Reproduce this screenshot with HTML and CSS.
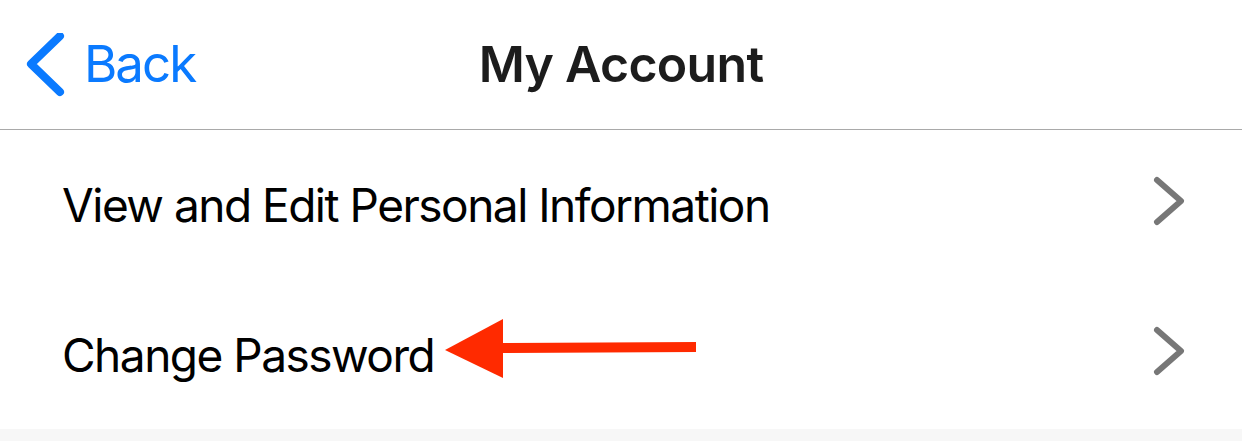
FILE: index.html
```html
<!DOCTYPE html>
<html lang="en">
<head>
  <meta charset="UTF-8" />
  <meta name="viewport" content="width=device-width, initial-scale=1.0"/>
  <title>My Account</title>
  <link rel="stylesheet" href="styles.css">
</head>
<body>
  <div id="screen">
    <div class="navbar">
      <a class="back" href="#">
        <svg class="back-icon" width="40" height="64" viewBox="0 0 40 64">
          <polyline points="34,3 5,31 34,59" fill="none" stroke="#0a7aff" stroke-width="8" stroke-linecap="round" stroke-linejoin="round"/>
        </svg>
        <span class="back-label">Back</span>
      </a>
      <h1 class="title">My Account</h1>
      <div class="spacer"></div>
    </div>

    <div class="list">
      <div class="row">
        <span class="row-label">View and Edit Personal Information</span>
        <svg class="chevron" width="34" height="52" viewBox="0 0 34 52">
          <polyline points="5,5 29,26 5,47" fill="none" stroke="#777" stroke-width="6" stroke-linecap="round" stroke-linejoin="round"/>
        </svg>
      </div>
      <div class="row">
        <span class="row-label">Change Password</span>
        <svg class="chevron" width="34" height="52" viewBox="0 0 34 52">
          <polyline points="5,5 29,26 5,47" fill="none" stroke="#777" stroke-width="6" stroke-linecap="round" stroke-linejoin="round"/>
        </svg>
        <!-- annotation arrow -->
        <svg class="arrow" width="252" height="60" viewBox="0 0 252 60">
          <polygon points="0,31 58,0 58,59" fill="#ff2a00"/>
          <polygon points="56,24 251,23 251,33 56,34" fill="#ff2a00"/>
        </svg>
      </div>
    </div>
    <div class="footer"></div>
  </div>
</body>
</html>
```

FILE: styles.css
```css
* {
  margin: 0;
  padding: 0;
  box-sizing: border-box;
}
html, body {
  width: 100%;
  height: 100%;
  overflow: hidden;
  background: #fff;
  font-family: Inter, "Noto Sans", sans-serif;
}
#screen {
  display: flex;
  flex-direction: column;
  height: 100%;
}

.navbar {
  display: grid;
  grid-template-columns: 1fr auto 1fr;
  align-items: center;
  height: 130px;
  border-bottom: 1px solid #a9a9a9;
  padding-bottom: 2px;
}

.back {
  display: flex;
  align-items: center;
  gap: 18px;
  padding-left: 26px;
  color: #0a7aff;
  text-decoration: none;
}
.back-icon {
  margin-top: 2px;
}
.back-label {
  font-size: 51px;
  font-weight: 400;
  letter-spacing: -2px;
}

.title {
  font-size: 50px;
  font-weight: 600;
  color: #1c1c1c;
  letter-spacing: -0.7px;
}

.list {
  display: flex;
  flex-direction: column;
}

.row {
  position: relative;
  display: flex;
  align-items: center;
  justify-content: space-between;
  height: 149px;
  padding: 0 56px 0 62px;
}
.row:first-child {
  height: 150px;
}
.row-label {
  font-size: 46px;
  font-weight: 400;
  color: #000;
  letter-spacing: -1.5px;
}
.chevron {
  margin-bottom: 8px;
}

.arrow {
  position: absolute;
  left: 445px;
  top: 39px;
}

.footer {
  flex: 1;
  background: #f7f7f7;
}
```
